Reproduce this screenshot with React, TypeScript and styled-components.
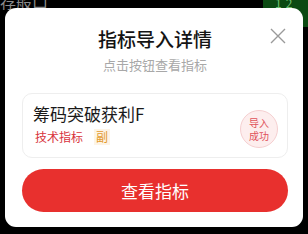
import React from "react";
import styled, { createGlobalStyle } from "styled-components";

const Global = createGlobalStyle`
  html, body { margin: 0; padding: 0; background: #000; }
  body { width: 308px; height: 234px; overflow: hidden; font-family: "Noto Sans CJK SC", "Noto Sans", sans-serif; }
`;

const Screen = styled.div`
  position: relative;
  width: 308px;
  height: 234px;
  background: #000;
  overflow: hidden;
`;

const BackRow = styled.div`
  display: flex;
  justify-content: space-between;
  align-items: flex-start;
  height: 40px;
`;

const BackText = styled.div`
  color: #8a8a8a;
  font-size: 16px;
  line-height: 16px;
  margin-top: -7px;
  white-space: nowrap;
`;

const GreenBlock = styled.div`
  width: 45px;
  height: 30px;
  background: #0b4a12;
  color: #6fbf6f;
  font-size: 12px;
  line-height: 12px;
  padding-left: 12px;
  box-sizing: border-box;
  letter-spacing: 4px;
  margin-top: -3px;
`;

const Modal = styled.div`
  position: absolute;
  top: 8px;
  left: 5px;
  width: 298px;
  height: 219px;
  background: #fff;
  border-radius: 11px;
  box-sizing: border-box;
  padding: 18px 15px 15px 17px;
  display: flex;
  flex-direction: column;
  align-items: stretch;
`;

const Title = styled.div`
  text-align: center;
  font-size: 19px;
  line-height: 26px;
  font-weight: 500;
  color: #141414;
`;

const Subtitle = styled.div`
  text-align: center;
  font-size: 13px;
  line-height: 18px;
  color: #a8a8a8;
  margin-top: 4px;
`;

const Close = styled.button`
  position: absolute;
  top: 20px;
  right: 17px;
  width: 16px;
  height: 16px;
  padding: 0;
  border: none;
  background: transparent;
  display: flex;
`;

const Card = styled.div`
  margin-top: 19px;
  height: 66px;
  box-sizing: border-box;
  border: 1px solid #eeeeee;
  border-radius: 10px;
  padding: 9px 9px 0 10px;
  display: flex;
  align-items: flex-start;
  justify-content: space-between;
`;

const CardInfo = styled.div`
  display: flex;
  flex-direction: column;
`;

const CardTitle = styled.div`
  font-size: 17px;
  line-height: 22px;
  color: #1a1a1a;
`;

const Tags = styled.div`
  display: flex;
  gap: 9px;
  margin-top: 4px;
`;

const Tag = styled.span<{ $color: string; $bg: string }>`
  font-size: 12px;
  line-height: 16px;
  color: ${(p) => p.$color};
  background: ${(p) => p.$bg};
  padding: 0 2px;
`;

const Badge = styled.div`
  width: 38px;
  height: 38px;
  margin-top: 7px;
  border-radius: 50%;
  background: #fdeeee;
  border: 1px solid #f5cfd0;
  box-sizing: border-box;
  display: flex;
  align-items: center;
  justify-content: center;
  text-align: center;
  color: #e0525a;
  font-size: 10px;
  line-height: 13px;
`;

const Button = styled.button`
  margin-top: 11px;
  height: 43px;
  border: none;
  border-radius: 22px;
  background: #e8302e;
  color: #fff;
  font-family: "Noto Sans CJK SC", "Noto Sans", sans-serif;
  font-size: 17px;
  letter-spacing: 0;
  display: flex;
  align-items: center;
  justify-content: center;
`;

export default function App() {
  return (
    <Screen>
      <Global />
      <BackRow>
        <BackText>荐般口</BackText>
        <GreenBlock>12</GreenBlock>
      </BackRow>
      <Modal>
        <Close aria-label="close">
          <svg width="16" height="16" viewBox="0 0 16 16">
            <path d="M1 1 L15 15 M15 1 L1 15" stroke="#9a9a9a" strokeWidth="1.4" fill="none" />
          </svg>
        </Close>
        <Title>指标导入详情</Title>
        <Subtitle>点击按钮查看指标</Subtitle>
        <Card>
          <CardInfo>
            <CardTitle>筹码突破获利F</CardTitle>
            <Tags>
              <Tag $color="#d8343c" $bg="transparent">技术指标</Tag>
              <Tag $color="#e39a2e" $bg="#fdf4e6">副</Tag>
            </Tags>
          </CardInfo>
          <Badge>
            导入
            <br />
            成功
          </Badge>
        </Card>
        <Button>查看指标</Button>
      </Modal>
    </Screen>
  );
}
